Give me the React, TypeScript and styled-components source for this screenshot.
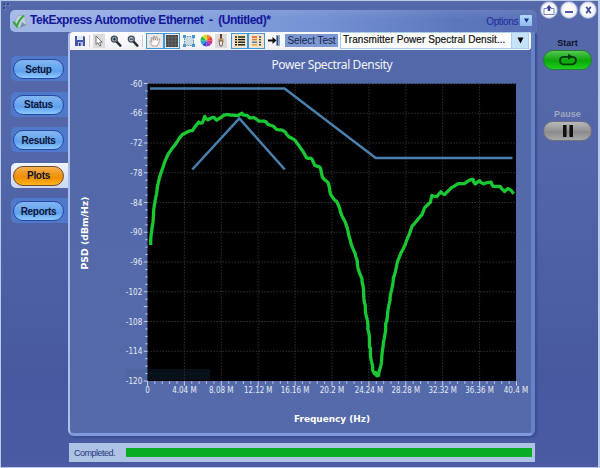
import React from 'react';
import styled, { createGlobalStyle } from 'styled-components';

const GlobalStyle = createGlobalStyle`
  * { box-sizing: border-box; }
  body { margin: 0; font-family: "Liberation Sans", Arial, sans-serif; overflow: hidden; }
  svg { display: block; }
`;

const Window = styled.div`
  position: relative;
  display: flex;
  width: 600px;
  height: 468px;
  background: linear-gradient(#5569aa 0%, #5266a9 35%, #4859a0 80%, #4b5ba3 100%);
  border: 1px solid #b9c9e8;
  border-right-width: 2px;
  overflow: hidden;
`;
const Grip = styled.svg`
  position: absolute;
  left: 1px;
  top: 1px;
`;
const Main = styled.div`
  width: 536px;
  flex: none;
  padding-top: 9px;
  display: flex;
  flex-direction: column;
`;
const TitleBar = styled.header`
  display: flex;
  align-items: center;
  margin-left: 9px;
  height: 22px;
  flex: none;
  padding: 0 5px 0 2px;
  border-radius: 5px 6px 0 5px;
  background: linear-gradient(rgba(255,255,255,.08), rgba(255,255,255,0) 40%),
    linear-gradient(90deg, #a5b9e8 0%, #829fdb 40%, #7390d2 60%, #5d77bd 85%, #5870b5 100%);
`;
const AppTitle = styled.h1`
  margin: 0 0 2px 3px;
  flex: 1;
  font-size: 12px;
  line-height: 16px;
  letter-spacing: -0.47px;
  color: #15159a;
  white-space: pre;
`;
const Options = styled.div`
  font-size: 10px;
  letter-spacing: -0.4px;
  color: #20289f;
  margin-right: 2px;
`;
const OptionsButton = styled.button`
  width: 12px;
  height: 11px;
  padding: 0;
  margin: 0 0 2px;
  display: grid;
  place-items: center;
  border: 0;
  border-radius: 1px;
  background: linear-gradient(#b2daf8, #8bbdf0);
`;
const Body = styled.div`
  display: flex;
  height: 404px;
  flex: none;
`;
const Nav = styled.nav`
  width: 67px;
  flex: none;
  padding: 24px 1px 0 10px;
  display: flex;
  flex-direction: column;
  gap: 10.6px;
`;
const Tab = styled.div<{ $active?: boolean }>`
  width: ${p => (p.$active ? 58 : 57)}px;
  height: 25px;
  flex: none;
  padding: 3px 3px 2px 2px;
  border-radius: 5px 0 0 5px;
  background: ${p => (p.$active ? 'linear-gradient(#f2f4fc, #cbd6f2)' : '#5079ca')};
`;
const TabButton = styled.button<{ $active?: boolean }>`
  display: block;
  width: 51px;
  height: 20px;
  padding: 1px 0 0;
  border-radius: 10px;
  border: 1px solid ${p => (p.$active ? '#6e4b28' : '#2747a5')};
  background: ${p => (p.$active
    ? 'linear-gradient(#f4b154 0%, #f09a20 35%, #ef9000 60%, #ffb41c 100%)'
    : 'linear-gradient(#83b6f1 0%, #6ca9ef 40%, #5f9fec 60%, #8ccaff 100%)')};
  font: bold 10px/16px "Liberation Sans", Arial, sans-serif;
  letter-spacing: -0.3px;
  color: #0b1534;
`;
const Panel = styled.main`
  width: 467px;
  flex: none;
  height: 404px;
  border: solid #7f9bdc;
  border-width: 0 4px 3px 2px;
  border-left-color: #a9bfec;
  border-right-color: #6584c8;
  border-radius: 4px 0 6px 6px;
  background: linear-gradient(#5368a9, #556aaa);
  box-shadow: 2px 2px 2px #3c4d91;
`;
const Toolbar = styled.div`
  display: flex;
  align-items: center;
  height: 18px;
  padding: 0 2px 1px 3px;
  background: linear-gradient(#fdfdff, #f0f1f8);
  border-radius: 3px 2px 3px 0;
`;
type ToolProps = { $w?: number; $kind?: 'muted' | 'on' };
const Tool = styled.button<ToolProps>`
  width: ${p => p.$w ?? 17}px;
  height: ${p => (p.$kind === 'on' ? 16 : 14)}px;
  flex: none;
  padding: 0;
  display: grid;
  place-items: center;
  border: ${p => (p.$kind === 'on' ? '1px solid #4298dd' : '0')};
  background: ${p => (p.$kind === 'on' ? '#e9e6e3' : p.$kind === 'muted' ? '#dedcdb' : 'transparent')};
`;
const Separator = styled.span`
  width: 1px;
  height: 12px;
  flex: none;
  margin: 0 3px;
  background: #cbcdd6;
`;
const SelectLabel = styled.div`
  width: 53px;
  height: 13px;
  margin-left: 3px;
  flex: none;
  text-align: center;
  background: #7c98d3;
  color: #14204a;
  font-size: 10px;
  line-height: 13px;
  letter-spacing: -0.05px;
  white-space: nowrap;
`;
const Select = styled.div`
  display: flex;
  width: 189px;
  height: 17px;
  flex: none;
  margin-left: 2px;
  border: 1px solid #a9cdea;
  background: #fff;
`;
const SelectText = styled.div`
  flex: 1;
  padding-left: 2px;
  font-size: 10px;
  line-height: 14px;
  letter-spacing: 0.06px;
  color: #111;
  -webkit-text-stroke: 0.2px #111;
  white-space: nowrap;
`;
const SelectArrow = styled.div`
  width: 17px;
  display: grid;
  place-items: center;
  background: #c4e2f8;
  border-left: 1px solid #a2d0ef;
`;
const Status = styled.footer`
  display: flex;
  align-items: center;
  width: 466px;
  height: 19px;
  flex: none;
  margin: 7px 0 0 68px;
  padding: 0 3px 0 5px;
  background: #aec2e3;
`;
const StatusText = styled.span`
  width: 52px;
  font-size: 9px;
  letter-spacing: -0.5px;
  color: #26397f;
`;
const Progress = styled.div`
  flex: 1;
  height: 9px;
  background: #08ad25;
`;
const Side = styled.aside`
  flex: none;
  width: 61px;
  padding: 0 0 0 3px;
`;
const Controls = styled.div`
  display: flex;
  gap: 1px;
  width: 58px;
`;
const RoundButton = styled.button`
  width: 18px;
  height: 18px;
  flex: none;
  padding: 0;
  display: grid;
  place-items: center;
  border-radius: 50%;
  border: 1px solid #8c9acb;
  background: radial-gradient(circle, #fff 40%, #cfd4e8 95%);
`;
const Action = styled.section<{ $gap: number }>`
  margin: ${p => p.$gap}px 0 0 2px;
  width: 51px;
  display: flex;
  flex-direction: column;
  align-items: center;
`;
const ActionLabel = styled.div<{ $disabled?: boolean }>`
  height: 12px;
  font-size: 9px;
  font-weight: bold;
  line-height: 11px;
  color: ${p => (p.$disabled ? '#a1a8bd' : '#0c102c')};
  letter-spacing: ${p => (p.$disabled ? 0.05 : 0)}px;
`;
const ActionButton = styled.button<{ $disabled?: boolean }>`
  width: 49px;
  height: 20px;
  padding: 0;
  display: grid;
  place-items: center;
  border-radius: 10px;
  border: 1px solid ${p => (p.$disabled ? '#6e717d' : '#247e36')};
  background: ${p => (p.$disabled
    ? 'linear-gradient(#b9b9bb, #969698 45%, #8b8b8d 55%, #a9a9ab)'
    : 'linear-gradient(#56c854, #16a916 45%, #0aa80a 55%, #1ed01e)')};
`;

const LEFT = 147.5, TOP = 83.5, WIDTH = 369, HEIGHT = 297.5;
const COL = WIDTH / 10, ROW = HEIGHT / 10;

const trace: number[][] = [
  [150.7,245],[151.7,230],[153.3,216.7],[155,201.7],[157.3,186.7],[160.5,175],[164,163.3],[168.3,154],[171.7,149],[175,145],[179.3,138.3],[182.7,134.3],[186.7,132],[192.3,131],[195,126.7],[198.3,122.7],[202.7,122.3],[204.3,117],[208.3,119.3],[211.7,118],[214,117.3],[216.7,120.3],[221.7,116.7],[224,115],[233.3,114.7],[238.3,115.3],[241.7,113.7],[245,114.7],[248.3,117.3],[251.7,117.3],[257.3,120.3],[262.7,120.7],[266,122.7],[271.7,125],[275,129],[280,129.3],[285,132.7],[290,136.7],[295,141.3],[299.3,145.3],[303.3,153.3],[306.7,157.7],[310.7,158],[315,164.7],[319.3,166.7],[322.7,176.7],[327.3,181.7],[330.7,193.3],[335,200],[340,209],[345,223],[350,238],[355,255],[357,262],[361.7,280],[365,303.3],[367.7,326.7],[370,346.7],[372.3,368],[374,374],[375.5,373],[377,375.5],[378.3,376],[380.7,365],[383.3,346.7],[386,323.3],[390,300],[393.3,278.3],[398.3,260],[402,251],[405,245],[408.3,236.7],[411.7,226.7],[416.7,220.7],[421.7,215],[425,207.3],[430,202.7],[432.3,195],[436.7,196.7],[441,191.7],[445,194.3],[451.7,187.3],[456.7,184.3],[463.3,184],[469.3,180],[472.7,180],[475.7,183.3],[479.3,181.3],[484,183.3],[490.7,182.7],[493.3,186],[500,187.3],[505,191],[507.7,188.7],[511.7,190.7],[514,193.3],
];

/* Subdivides each segment and adds small fluctuations around it. */
const tracePath = (() => {
  const out: string[] = [];
  trace.forEach(([x, y], i) => {
    if (i === 0) { out.push(`M${x} ${y}`); return; }
    const [px, py] = trace[i - 1];
    const n = Math.max(1, Math.round(Math.hypot(x - px, y - py) / 1.7));
    for (let k = 1; k <= n; k++) {
      const t = k / n;
      const j = Math.sin((i * 7 + k) * 12.9898) * 0.6;
      out.push(`L${(px + (x - px) * t + j * 0.7).toFixed(1)} ${(py + (y - py) * t - j).toFixed(1)}`);
    }
  });
  return out.join('');
})();

const xLabels = ['0', '4.04 M', '8.08 M', '12.12 M', '16.16 M', '20.2 M', '24.24 M', '28.28 M', '32.32 M', '36.36 M', '40.4 M'];
const xWidths = [4.5, 24.5, 24.5, 28.5, 28.5, 24.5, 28.5, 28.5, 28.5, 28.5, 24.5];
const chartFont = '"DejaVu Sans Condensed", "DejaVu Sans", sans-serif';

const Chart = () => (
  <svg width="461" height="382" viewBox="70 50 461 382" fontFamily={chartFont}>
    <text x="332" y="69" fill="#f1f4fb" fontFamily='"Noto Sans", sans-serif' fontSize="12" textAnchor="middle" textLength="121">Power Spectral Density</text>
    <rect x="125" y="369" width="23" height="11" fill="#5066a0" />
    <rect x={LEFT} y={TOP} width={WIDTH - 0.5} height={HEIGHT} fill="#000" />
    <rect x="148" y="369" width="62" height="11" fill="#081019" />
    <g stroke="#3b3b3b" strokeWidth="1" strokeDasharray="1.3 1.7">
      {Array.from({ length: 9 }, (_, i) => (
        <React.Fragment key={i}>
          <line x1={LEFT + COL * (i + 1)} x2={LEFT + COL * (i + 1)} y1={TOP} y2={TOP + HEIGHT} />
          <line x1={LEFT} x2={LEFT + WIDTH} y1={TOP + ROW * (i + 1)} y2={TOP + ROW * (i + 1)} />
        </React.Fragment>
      ))}
    </g>
    <line x1={LEFT} x2={LEFT + WIDTH} y1="83.5" y2="83.5" stroke="#6c7da8" strokeDasharray="1 2" />
    <g stroke="#d4dcee" strokeWidth="0.9">
      {Array.from({ length: 51 }, (_, i) => {
        const x = LEFT + (COL * i) / 5;
        return <line key={i} x1={x} x2={x} y1="381.3" y2={i % 5 === 0 ? 385.8 : 383.8} />;
      })}
      {Array.from({ length: 41 }, (_, i) => {
        const y = TOP + (ROW * i) / 4;
        return <line key={i} x1={i % 4 === 0 || i % 10 === 0 ? 143.8 : 145.3} x2="147.5" y1={y} y2={y} />;
      })}
    </g>
    <g fill="#e6ebf6" fontSize="8">
      {Array.from({ length: 11 }, (_, i) => {
        const v = String(-60 - 6 * i);
        return <text key={v} x="142.3" y={TOP + ROW * i + 3} textAnchor="end" textLength={v.length === 3 ? 12 : 16.5}>{v}</text>;
      })}
      {xLabels.map((t, i) => (
        <text key={t} x={LEFT + COL * i - (i === 10 ? 0.5 : 0)} y="393" textAnchor="middle" textLength={xWidths[i]} lengthAdjust="spacingAndGlyphs">{t}</text>
      ))}
    </g>
    <g fill="none" stroke="#4a80ad" strokeWidth="2.5">
      <path d="M150 88.5H284.5L375.7 158H512.5" />
      <path d="M192.3 169.5L239.3 118.3L284.8 169.5" />
    </g>
    <path d={tracePath} fill="none" stroke="#19c832" strokeWidth="3.3" strokeLinejoin="round" />
    <g fill="#fff" fontFamily='"DejaVu Sans", sans-serif' fontWeight="bold" fontSize="9.5">
      <text x="294" y="421.5" textLength="76" lengthAdjust="spacingAndGlyphs">Frequency (Hz)</text>
      <text transform="translate(88 269.5) rotate(-90)" textLength="73" lengthAdjust="spacingAndGlyphs">PSD (dBm/Hz)</text>
    </g>
  </svg>
);

const Lens = ({ plus }: { plus?: boolean }) => (
  <svg width="12" height="12" viewBox="0 0 12 12">
    <path d="M6 6L10.3 10.6" stroke="#2b2b2f" strokeWidth="2.5" strokeLinecap="round" />
    <circle cx="4.3" cy="4.1" r="3" fill="#a9c5db" stroke="#444b55" strokeWidth="1.3" />
    <path d={plus ? 'M2.6 4.1H6M4.3 2.4V5.8' : 'M2.6 4.1H6'} stroke="#172333" />
  </svg>
);

const wheel = ['#f08b24', '#f0482c', '#e02f7a', '#8d3fc9', '#354bcf', '#22a8dc', '#28b848', '#d8dc28'];
const Wheel = () => (
  <svg width="13" height="13" viewBox="-6.5 -6.5 13 13">
    {wheel.map((c, i) => {
      const a = (i * Math.PI) / 4, b = ((i + 1) * Math.PI) / 4;
      return <path key={c} fill={c} d={`M0 0L${6 * Math.sin(a)} ${-6 * Math.cos(a)}A6 6 0 0 1 ${6 * Math.sin(b)} ${-6 * Math.cos(b)}Z`} />;
    })}
  </svg>
);

const legendColors = ['#e2483a', '#d98238', '#3b75bd', '#dc994b'];
const Rows = ({ legend }: { legend?: boolean }) => (
  <svg width="12" height="12" viewBox="0 0 12 12">
    <rect width="12" height="12" fill="#fbe2b5" />
    {[2, 4.6, 7.2, 9.8].map((y, i) => (
      <g key={y} strokeWidth="1.4">
        <path d={legend ? `M1 ${y}H6` : `M1 ${y}H3`} stroke={legend ? legendColors[i] : '#161616'} />
        <path d={legend ? `M8 ${y}H10` : `M4 ${y}H11`} stroke={legend ? '#434b57' : '#161616'} />
      </g>
    ))}
  </svg>
);

const tabs = ['Setup', 'Status', 'Results', 'Plots', 'Reports'];

export default function App() {
  return (
    <>
      <GlobalStyle />
      <Window>
        <Grip width="9" height="9" viewBox="0 0 9 9">
          <path d="M1 1h2v2H1zM5 1h2v2H5zM1 5h2v2H1z" fill="#3b4c91" />
          <path d="M3 3h1v1H3zM7 3h1v1H7zM3 7h1v1H3z" fill="#8b9dd0" />
        </Grip>
        <Main>
          <TitleBar>
            <svg width="15" height="15" viewBox="0 0 15 15">
              <path d="M5 2L12.5 1L14.5 11L6 14L2 11Z" fill="#c3d1df" stroke="#8fa1b6" strokeWidth=".6" />
              <path d="M10 8L14 11L8 14Z" fill="#7991a9" />
              <path d="M1.3 7.7L5 12.2C6 8 8.5 4.5 12 1.5" fill="none" stroke="#37a83c" strokeWidth="2.2" />
            </svg>
            <AppTitle>{'TekExpress Automotive Ethernet  -  (Untitled)*'}</AppTitle>
            <Options>Options</Options>
            <OptionsButton>
              <svg width="5" height="5"><path d="M0 .5H5L2.5 4.8Z" fill="#1c2c91" /></svg>
            </OptionsButton>
          </TitleBar>
          <Body>
            <Nav>
              {tabs.map(t => (
                <Tab key={t} $active={t === 'Plots'}>
                  <TabButton $active={t === 'Plots'}>{t}</TabButton>
                </Tab>
              ))}
            </Nav>
            <Panel>
              <Toolbar>
                <Tool $w={13}>
                  <svg width="10" height="10" viewBox="0 0 10 10">
                    <path d="M0 0H9L10 1V10H0Z" fill="#4756a8" /><path d="M2 0H8V4H2Z" fill="#dfe7f8" /><path d="M3 6H8V10H3Z" fill="#aebbe3" /><path d="M4 7H5.5V10H4Z" fill="#293980" />
                  </svg>
                </Tool>
                <Separator />
                <Tool $w={12} $kind="muted">
                  <svg width="8" height="12" viewBox="0 0 8 12"><path d="M1 1V9.5L3 7.7L4.5 11L6 10.3L4.6 7.2H7.3Z" fill="#fff" stroke="#575757" strokeWidth=".8" /></svg>
                </Tool>
                <Tool $w={21}><Lens plus /></Tool>
                <Tool $w={13}><Lens /></Tool>
                <Separator />
                <Tool $kind="on" $w={18}>
                  <svg width="12" height="12" viewBox="0 0 12 12"><path d="M3.5 11L.8 6.7L1.5 5.8L3 7.2L2.2 3L3.1 2.6L4.6 5.5L4.4 1.4L5.4 1.2L6.3 5L7.2 1.7L8.2 2L8 5.6L10 3.6L10.7 4.2L9.5 8.5L8.2 11Z" fill="#fff" stroke="#8d7b75" strokeWidth=".7" /></svg>
                </Tool>
                <Tool $kind="on" $w={16}>
                  <svg width="12" height="12" viewBox="0 0 11 11"><rect width="11" height="11" fill="#494949" /><path d="M0 2.5H11M0 5.5H11M0 8.5H11M2.5 0V11M5.5 0V11M8.5 0V11" stroke="#777" strokeWidth=".5" /></svg>
                </Tool>
                <Tool $w={17}>
                  <svg width="12" height="12" viewBox="0 0 12 12"><rect x="1.5" y="1.5" width="9" height="9" fill="#c7dbe4" stroke="#668b9a" strokeDasharray="1.5 1" /><path d="M0 0h3v3H0zM9 0h3v3H9zM0 9h3v3H0zM9 9h3v3H9z" fill="#4598d0" /></svg>
                </Tool>
                <Tool $w={18}><Wheel /></Tool>
                <Tool $w={12} $kind="muted">
                  <svg width="9" height="13" viewBox="0 0 9 13"><path d="M3 0H5V5H3Z" fill="#5d4030" /><path d="M1.5 4.5H6.5V7H1.5Z" fill="#c7925d" /><path d="M2 7H6L5 12H3Z" fill="#f5eee2" stroke="#59443a" strokeWidth=".8" /></svg>
                </Tool>
                <Tool $w={4} />
                <Tool $kind="on" $w={17}><Rows /></Tool>
                <Tool $kind="on" $w={17}><Rows legend /></Tool>
                <Tool $w={17}>
                  <svg width="12" height="11" viewBox="0 0 12 11"><rect x="8" y="0" width="4" height="11" fill="#8daad6" /><path d="M0 5.5H6" stroke="#111" strokeWidth="2" /><path d="M4.5 2L8.5 5.5L4.5 9Z" fill="#111" /><path d="M9.5 1V10" stroke="#35456f" strokeWidth="1.2" /></svg>
                </Tool>
                <SelectLabel>Select Test</SelectLabel>
                <Select>
                  <SelectText>Transmitter Power Spectral Densit...</SelectText>
                  <SelectArrow><svg width="7" height="7"><path d="M.5 .5H6.5L3.5 6.5Z" fill="#000" /></svg></SelectArrow>
                </Select>
              </Toolbar>
              <Chart />
            </Panel>
          </Body>
          <Status>
            <StatusText>Completed.</StatusText>
            <Progress />
          </Status>
        </Main>
        <Side>
          <Controls>
            <RoundButton>
              <svg width="12" height="11" viewBox="0 0 12 11"><path d="M3.5 3.5H1V9.5H11V3.5H8.5" fill="none" stroke="#7883b2" /><path d="M6 0L9.2 3.5H7.2V6H4.8V3.5H2.8Z" fill="#35459c" /></svg>
            </RoundButton>
            <Tool $w={0} />
            <RoundButton>
              <svg width="8" height="8"><path d="M0 6H8" stroke="#4b5ba8" strokeWidth="2" /></svg>
            </RoundButton>
            <RoundButton>
              <svg width="7" height="8" viewBox="0 0 7 8"><path d="M1.2 .7L5.8 7.3M5.8 .7L1.2 7.3" stroke="#384a9e" strokeWidth="1.7" /></svg>
            </RoundButton>
          </Controls>
          <Action $gap={19}>
            <ActionLabel>Start</ActionLabel>
            <ActionButton>
              <svg width="20" height="14" viewBox="0 0 20 14">
                <path d="M13 3.8H14.5Q18 4.2 18 7.3T14.5 11.3H5.5Q2 11 2 7.5T5.5 3.8H11" fill="none" stroke="#083b0e" strokeWidth="1.8" />
                <path d="M10 .8L15 3.8L10 6.8Z" fill="#083b0e" />
              </svg>
            </ActionButton>
          </Action>
          <Action $gap={39}>
            <ActionLabel $disabled>Pause</ActionLabel>
            <ActionButton $disabled>
              <svg width="10" height="12"><path d="M0 0H3.6V12H0zM6.4 0H10V12H6.4z" fill="#111" /></svg>
            </ActionButton>
          </Action>
        </Side>
      </Window>
    </>
  );
}
